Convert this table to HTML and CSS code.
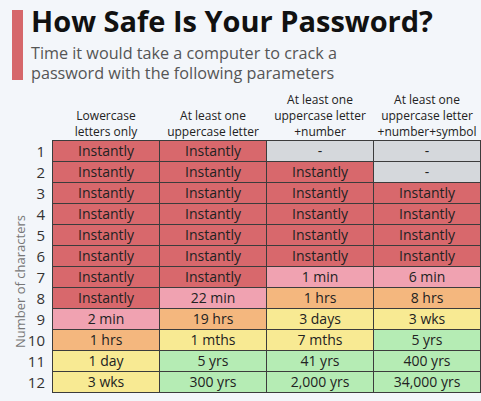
FILE: index.html
```html
<!DOCTYPE html>
<html>
<head>
<title>How Safe Is Your Password?</title>
<link rel="stylesheet" href="styles.css">
</head>
<body>
<div class="head">
  <div class="bar"></div>
  <div>
    <h1>How Safe Is Your Password?</h1>
    <p class="sub">Time it would take a computer to crack a<br>password with the following parameters</p>
  </div>
</div>

<table class="grid">
  <tr class="top">
    <th class="axis"></th>
    <th class="num"></th>
    <th>Lowercase<br>letters only</th>
    <th>At least one<br>uppercase letter</th>
    <th>At least one<br>uppercase letter<br>+number</th>
    <th>At least one<br>uppercase letter<br>+number+symbol</th>
  </tr>
  <tr><td class="axis" rowspan="12"><span>Number of characters</span></td><td class="num">1</td><td class="r">Instantly</td><td class="r">Instantly</td><td class="g">-</td><td class="g">-</td></tr>
  <tr><td class="num">2</td><td class="r">Instantly</td><td class="r">Instantly</td><td class="r">Instantly</td><td class="g">-</td></tr>
  <tr><td class="num">3</td><td class="r">Instantly</td><td class="r">Instantly</td><td class="r">Instantly</td><td class="r">Instantly</td></tr>
  <tr><td class="num">4</td><td class="r">Instantly</td><td class="r">Instantly</td><td class="r">Instantly</td><td class="r">Instantly</td></tr>
  <tr><td class="num">5</td><td class="r">Instantly</td><td class="r">Instantly</td><td class="r">Instantly</td><td class="r">Instantly</td></tr>
  <tr><td class="num">6</td><td class="r">Instantly</td><td class="r">Instantly</td><td class="r">Instantly</td><td class="r">Instantly</td></tr>
  <tr><td class="num">7</td><td class="r">Instantly</td><td class="r">Instantly</td><td class="p">1 min</td><td class="p">6 min</td></tr>
  <tr><td class="num">8</td><td class="r">Instantly</td><td class="p">22 min</td><td class="o">1 hrs</td><td class="o">8 hrs</td></tr>
  <tr><td class="num">9</td><td class="p">2 min</td><td class="o">19 hrs</td><td class="y">3 days</td><td class="y">3 wks</td></tr>
  <tr><td class="num">10</td><td class="o">1 hrs</td><td class="y">1 mths</td><td class="y">7 mths</td><td class="gr">5 yrs</td></tr>
  <tr><td class="num">11</td><td class="y">1 day</td><td class="gr">5 yrs</td><td class="gr">41 yrs</td><td class="gr">400 yrs</td></tr>
  <tr><td class="num">12</td><td class="y">3 wks</td><td class="gr">300 yrs</td><td class="gr">2,000 yrs</td><td class="gr">34,000 yrs</td></tr>
</table>
</body>
</html>
```

FILE: styles.css
```css
body {
  margin: 0;
  background: #f3f6fa;
  font-family: "Open Sans", "Noto Sans", sans-serif;
  color: #222;
}

.head {
  display: flex;
  gap: 8px;
  padding: 10px 0 0 12px;
}

.bar {
  width: 11px;
  height: 70px;
  background: #d6676b;
  flex: none;
}

h1 {
  margin: 0;
  font-size: 29px;
  font-weight: 700;
  line-height: 32px;
  color: #111;
  margin-top: -5px;
}

.sub {
  margin: 6px 0 0 0;
  font-size: 16.2px;
  line-height: 20px;
  color: #555;
}

table.grid {
  border-collapse: collapse;
  margin: 9px 0 0 12px;
  table-layout: fixed;
}

.grid th {
  font-size: 12px;
  font-weight: 400;
  line-height: 16px;
  vertical-align: bottom;
  padding: 0;
  width: 107px;
  text-align: center;
}

.grid th.axis, .grid td.axis { width: 14px; padding: 0; }
.grid th.num, .grid td.num { width: 18px; }

.grid td {
  height: 20px;
  padding: 0;
  font-size: 14px;
  line-height: 20px;
  text-align: center;
  border: 1px solid #3c3c3c;
}

.grid td.num {
  border: none;
  text-align: right;
  padding-right: 7px;
  font-size: 15px;
  color: #333;
}

.grid td.axis {
  border: none;
  vertical-align: top;
}

.axis span {
  display: block;
  writing-mode: vertical-rl;
  transform: rotate(180deg);
  font-size: 13px;
  color: #777;
  white-space: nowrap;
  margin: 74px 0 0 2px;
  line-height: 13px;
}

.r { background: #d8686c; }
.g { background: #d5d8dc; }
.p { background: #f0a2b1; }
.o { background: #f4b77e; }
.y { background: #f8ea93; }
.gr { background: #b5ecb4; }
```
